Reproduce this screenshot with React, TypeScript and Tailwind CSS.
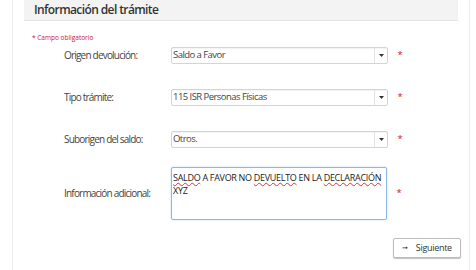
import React from "react";

const font = { fontFamily: '"Open Sans", "Liberation Sans", sans-serif' };

function Caret() {
  return (
    <svg width="5" height="3" viewBox="0 0 5 3" className="block">
      <path d="M0 0 L5 0 L2.5 3 Z" fill="#333" />
    </svg>
  );
}

function Select({ value }: { value: string }) {
  return (
    <div className="flex h-[17px] w-[217px] items-stretch rounded-[2px] border border-[#d4d4d4] bg-white shadow-[inset_0_1px_1px_rgba(0,0,0,0.05)]">
      <div className="flex flex-1 items-center pl-[1px] text-[9.5px] tracking-[-0.55px] text-[#444]">{value}</div>
      <div className="flex w-[13px] items-center justify-center border-l border-[#e2e2e2]">
        <Caret />
      </div>
    </div>
  );
}

function Star() {
  return <span className="w-[12px] text-center text-[9.5px] text-[#d0103a]">*</span>;
}

function Row({ label, children, h, mb }: { label: string; children: React.ReactNode; h: string; mb: string }) {
  return (
    <div className={`flex items-center pl-[40px] ${h} ${mb}`}>
      <div className="w-[107px] whitespace-nowrap text-[10px] tracking-[-0.8px] text-[#444]">{label}</div>
      <div>{children}</div>
      <div className="ml-[6px] flex">
        <Star />
      </div>
    </div>
  );
}

const wavy = "underline decoration-wavy decoration-[#e03030] decoration-[1px] underline-offset-1";

export default function App() {
  return (
    <div className="h-[270px] w-[476px] overflow-hidden bg-white" style={font}>
      <div className="ml-[12px] mr-[6px] h-full border-l border-r border-[#ececec] px-[11px]">
        <div className="flex h-[21px] items-center border-b border-[#e3e3e3] bg-[#f3f3f3] pl-[10px] text-[12px] font-semibold tracking-[-0.6px] text-[#333]">
          Información del trámite
        </div>
        <div className="mt-[12px] pl-[8px] text-[6.5px] text-[#d0103a]">* Campo obligatorio</div>
        <div className="mt-[4px]">
          <Row label="Origen devolución:" h="h-[17px]" mb="mb-[25px]">
            <Select value="Saldo a Favor" />
          </Row>
          <Row label="Tipo trámite:" h="h-[17px]" mb="mb-[25px]">
            <Select value="115 ISR Personas Físicas" />
          </Row>
          <Row label="Suborigen del saldo:" h="h-[17px]" mb="mb-[19px]">
            <Select value="Otros." />
          </Row>
          <Row label="Información adicional:" h="h-[53px]" mb="mb-[18px]">
            <div className="h-[53px] w-[216px] rounded-[2px] border border-[#8db8e6] bg-white px-[1px] pt-[3px] text-[9px] leading-[13px] tracking-[-0.3px] text-[#222] shadow-[0_0_2px_rgba(102,175,233,0.5)]">
              <span className={wavy}>SALDO</span> A FAVOR NO <span className={wavy}>DEVUELTO</span> EN LA{" "}
              <span className={wavy}>DECLARACIÓN</span>
              <br />
              XYZ
            </div>
          </Row>
        </div>
        <div className="-mr-[3px] flex justify-end">
          <button className="flex h-[20px] w-[68px] items-center justify-center gap-[8px] rounded-[2px] border border-[#bdbdbd] bg-white text-[9px] tracking-[-0.3px] text-[#333] shadow-[0_1px_1px_rgba(0,0,0,0.25)]" style={font}>
            <span className="text-[7px]">➞</span>
            <span>Siguiente</span>
          </button>
        </div>
      </div>
    </div>
  );
}
